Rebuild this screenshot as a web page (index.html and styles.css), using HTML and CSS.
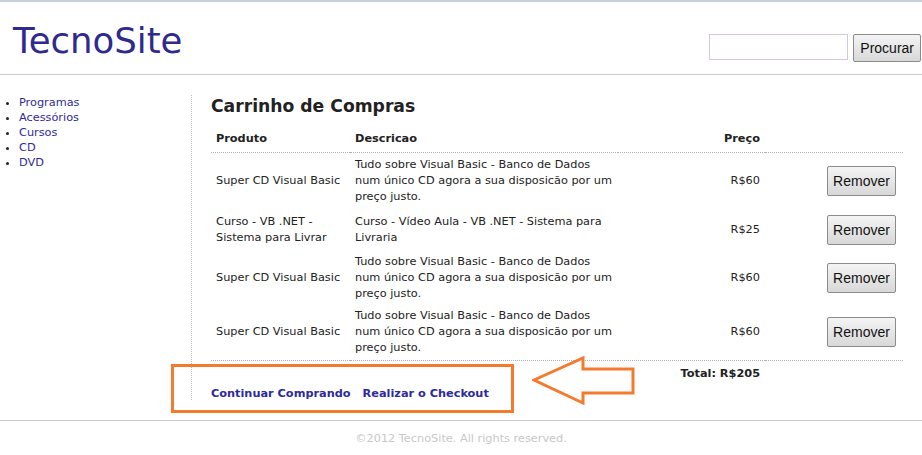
FILE: index.html
```html
<!DOCTYPE html>
<html lang="pt">
<head>
    <meta charset="UTF-8">
    <title>TecnoSite - Carrinho de Compras</title>
<link rel="stylesheet" href="styles.css">
</head>
<body>
    <div id="page">
      <header id="header">
        <h1 class="logo">TecnoSite</h1>
        <form class="search">
          <input type="text" class="search-box">
          <button type="button" class="btn">Procurar</button>
        </form>
      </header>

      <div id="body">
        <nav id="sidebar">
          <ul>
            <li><a href="#">Programas</a></li>
            <li><a href="#">Acessórios</a></li>
            <li><a href="#">Cursos</a></li>
            <li><a href="#">CD</a></li>
            <li><a href="#">DVD</a></li>
          </ul>
        </nav>

        <main id="content">
          <h2>Carrinho de Compras</h2>
          <table class="cart">
            <thead>
              <tr>
                <th class="col-prod">Produto</th>
                <th class="col-desc">Descricao</th>
                <th class="col-price">Preço</th>
                <th class="col-act"></th>
              </tr>
            </thead>
            <tbody>
              <tr class="r1">
                <td>Super CD Visual Basic</td>
                <td>Tudo sobre Visual Basic - Banco de Dados num único CD agora a sua disposicão por um preço justo.</td>
                <td class="price">R$60</td>
                <td class="act"><button type="button" class="btn btn-row">Remover</button></td>
              </tr>
              <tr class="r2">
                <td>Curso - VB .NET - Sistema para Livrar</td>
                <td>Curso - Vídeo Aula - VB .NET - Sistema para Livraria</td>
                <td class="price">R$25</td>
                <td class="act"><button type="button" class="btn btn-row">Remover</button></td>
              </tr>
              <tr class="r3">
                <td>Super CD Visual Basic</td>
                <td>Tudo sobre Visual Basic - Banco de Dados num único CD agora a sua disposicão por um preço justo.</td>
                <td class="price">R$60</td>
                <td class="act"><button type="button" class="btn btn-row">Remover</button></td>
              </tr>
              <tr class="r4">
                <td>Super CD Visual Basic</td>
                <td>Tudo sobre Visual Basic - Banco de Dados num único CD agora a sua disposicão por um preço justo.</td>
                <td class="price">R$60</td>
                <td class="act"><button type="button" class="btn btn-row">Remover</button></td>
              </tr>
            </tbody>
            <tfoot>
              <tr>
                <td colspan="3" class="total">Total: R$205</td>
                <td></td>
              </tr>
            </tfoot>
          </table>
          <div class="actions">
            <a href="#">Continuar Comprando</a>
            <a href="#">Realizar o Checkout</a>
          </div>
        </main>
      </div>

      <footer id="footer">©2012 TecnoSite. All rights reserved.</footer>

      <!-- marcação do print -->
      <div class="mark-box"></div>
      <svg class="mark-arrow" width="106" height="50" viewBox="0 0 106 50">
        <polygon points="2,24 51,2 51,13 101,13 101,37 51,37 51,47" fill="#fff" stroke="#f47a2e" stroke-width="3" stroke-linejoin="miter"/>
      </svg>
    </div>
</body>
</html>
```

FILE: styles.css
```css
body {
  margin: 0;
  font-family: "DejaVu Sans", Verdana, sans-serif;
  font-size: 11.3px;
  color: #222;
  background: #fff;
}
#page {
  position: relative;
  border-top: 2px solid #c7d0d8;
}
a { color: #2e2a9c; text-decoration: none; }

/* cabeçalho */
#header {
  display: flex;
  justify-content: space-between;
  align-items: flex-end;
  height: 72px;
  border-bottom: 1px solid #c9cec9;
}
.logo {
  margin: 18px 0 0 13px;
  align-self: flex-start;
  font-family: "DejaVu Sans", Verdana, sans-serif;
  font-weight: normal;
  font-size: 35.5px;
  color: #2e2a8e;
}
.search {
  display: flex;
  gap: 5px;
  margin: 0 1px 12px 0;
}
.search-box {
  width: 137px;
  height: 24px;
  padding: 0;
  border: 1px solid #d6c8da;
}
.btn {
  font-family: "Liberation Sans", Arial, sans-serif;
  font-size: 14px;
  color: #111;
  padding: 0 6px;
  height: 28px;
  border: 1px solid #8b8b8b;
  border-radius: 2px;
  background: linear-gradient(#f4f4f4, #d8d8d8);
}
.btn-row {
  height: 30px;
  width: 69px;
  padding: 0;
}

/* corpo */
#body {
  display: flex;
}
#sidebar {
  width: 191px;
  padding-top: 20px;
}
#sidebar ul {
  margin: 0;
  padding-left: 19px;
  line-height: 15px;
}

#content {
  flex: 1;
  margin: 20px 0 20px;
  padding: 0 19px 0 19px;
  border-left: 1px dotted #bbb;
}
#content h2 {
  margin: 1px 0 15px;
  font-size: 17.2px;
  color: #222;
}
.cart {
  width: 692px;
  border-collapse: collapse;
  line-height: 16px;
}
.cart th {
  text-align: left;
  padding: 0 5px 5px;
  border-bottom: 1px dotted #b9aab9;
}
.cart td { padding: 0 5px; }
.cart .r1 { height: 56px; }
.cart .r2 { height: 42px; }
.cart .r3 { height: 54px; }
.cart .r4 { height: 56px; }
.cart .r4 td { border-bottom: 1px dotted #b9aab9; }
.col-prod { width: 129px; }
.col-desc { width: 258px; }
.col-price { width: 137px; text-align: right !important; }
.price { text-align: right; }
.act { text-align: right; padding-right: 7px !important; }
.total {
  text-align: right;
  font-weight: bold;
  padding-top: 5px !important;
}
.actions {
  display: flex;
  gap: 12px;
  margin-top: 5px;
  font-weight: bold;
}

/* rodapé */
#footer {
  border-top: 1px solid #c9cec9;
  border-bottom: 1px dotted #d4c4d4;
  padding: 11px 0 10px;
  text-align: center;
  color: #c8c8c8;
}

/* anotação laranja */
.mark-box {
  position: absolute;
  left: 171px;
  top: 362px;
  width: 337px;
  height: 43px;
  border: 3px solid #f47a2e;
}
.mark-arrow {
  position: absolute;
  left: 532px;
  top: 354px;
}
```
